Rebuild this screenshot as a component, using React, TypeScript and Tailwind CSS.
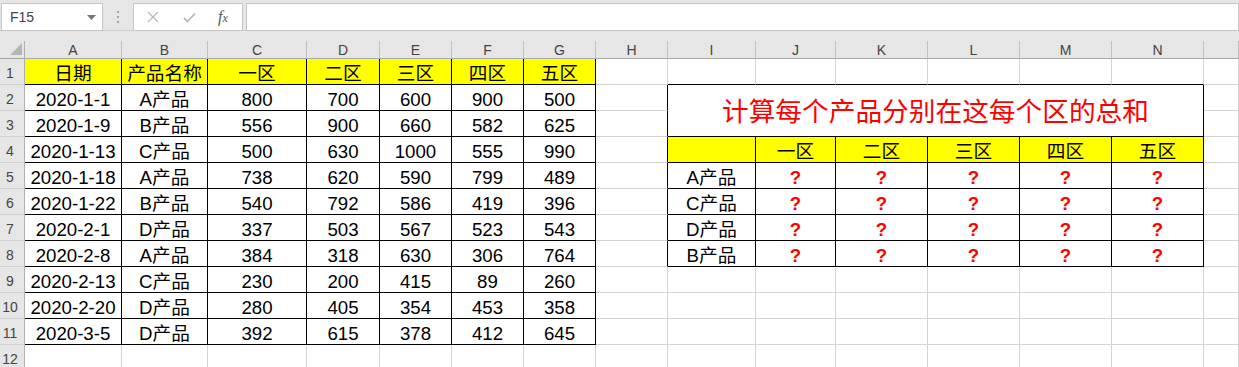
import React from "react";

const FONT = { fontFamily: '"Liberation Sans", "Noto Sans CJK SC", sans-serif' };

const left: string[][] = [
  ["日期", "产品名称", "一区", "二区", "三区", "四区", "五区"],
  ["2020-1-1", "A产品", "800", "700", "600", "900", "500"],
  ["2020-1-9", "B产品", "556", "900", "660", "582", "625"],
  ["2020-1-13", "C产品", "500", "630", "1000", "555", "990"],
  ["2020-1-18", "A产品", "738", "620", "590", "799", "489"],
  ["2020-1-22", "B产品", "540", "792", "586", "419", "396"],
  ["2020-2-1", "D产品", "337", "503", "567", "523", "543"],
  ["2020-2-8", "A产品", "384", "318", "630", "306", "764"],
  ["2020-2-13", "C产品", "230", "200", "415", "89", "260"],
  ["2020-2-20", "D产品", "280", "405", "354", "453", "358"],
  ["2020-3-5", "D产品", "392", "615", "378", "412", "645"],
];

const rightHead = ["", "一区", "二区", "三区", "四区", "五区"];
const rightNames = ["A产品", "C产品", "D产品", "B产品"];
const letters = ["A", "B", "C", "D", "E", "F", "G", "H", "I", "J", "K", "L", "M", "N", ""];

function cellContent(r: number, c: number): { text: string; yellow: boolean; red: boolean } {
  if (r >= 1 && r <= 11 && c >= 1 && c <= 7) {
    return { text: left[r - 1][c - 1], yellow: r === 1, red: false };
  }
  if (r === 4 && c >= 9 && c <= 14) {
    return { text: rightHead[c - 9], yellow: true, red: false };
  }
  if (r >= 5 && r <= 8 && c >= 9 && c <= 14) {
    if (c === 9) return { text: rightNames[r - 5], yellow: false, red: false };
    return { text: "?", yellow: false, red: true };
  }
  return { text: "", yellow: false, red: false };
}

function borderR(r: number, c: number): boolean {
  if (r >= 1 && r <= 11 && c >= 1 && c <= 7) return true;
  if (c === 8 && r >= 2 && r <= 8) return true;
  if (r >= 4 && r <= 8 && c >= 9 && c <= 14) return true;
  return false;
}

function borderB(r: number, c: number): boolean {
  if (r >= 1 && r <= 11 && c >= 1 && c <= 7) return true;
  if (r === 1 && c >= 9 && c <= 14) return true;
  if (r >= 4 && r <= 8 && c >= 9 && c <= 14) return true;
  return false;
}

function Cell({ r, c }: { r: number; c: number }) {
  const { text, yellow, red } = cellContent(r, c);
  const br = borderR(r, c) ? "border-r-black" : "border-r-[#d4d4d4]";
  const bb = borderB(r, c) ? "border-b-black" : "border-b-[#d4d4d4]";
  const bg = yellow ? "bg-[#ffff00]" : "bg-white";
  const color = red ? "text-[#ff0000] font-bold" : "text-black";
  return (
    <div
      className={`h-[26px] border-r border-b ${br} ${bb} ${bg} ${color} flex items-end justify-center overflow-visible whitespace-nowrap text-[18.67px] leading-[19px] pb-[1px]`}
    >
      {text}
    </div>
  );
}

function XIcon() {
  return (
    <svg width="12" height="12" viewBox="0 0 12 12">
      <path d="M1 1 L11 11 M11 1 L1 11" stroke="#b8b8b8" strokeWidth="1.3" fill="none" />
    </svg>
  );
}

function CheckIcon() {
  return (
    <svg width="13" height="11" viewBox="0 0 13 11">
      <path d="M1 6 L4.5 9.5 L12 1.5" stroke="#b8b8b8" strokeWidth="1.8" fill="none" />
    </svg>
  );
}

export default function App() {
  const rows = Array.from({ length: 12 }, (_, i) => i + 1);
  const cols = Array.from({ length: 15 }, (_, i) => i + 1);
  return (
    <div className="w-[1239px] h-[367px] overflow-hidden bg-white" style={FONT}>
      {/* formula bar */}
      <div className="h-[41px] bg-[#e6e6e6]">
        <div className="flex items-start pt-[3px] pl-[1px] h-[31px] border-b border-[#d0d0d0]">
          <div className="w-[102px] h-[28px] bg-white border border-[#c6c6c6] flex items-center justify-between pl-[8px] pr-[6px] text-[14px] text-[#444]">
            <span>F15</span>
            <svg width="9" height="5" viewBox="0 0 9 5">
              <path d="M0 0 L9 0 L4.5 5 Z" fill="#777" />
            </svg>
          </div>
          <div className="w-[30px] h-[28px] flex flex-col items-center justify-center gap-[3px]">
            <div className="w-[2px] h-[2px] bg-[#a8a8a8]" />
            <div className="w-[2px] h-[2px] bg-[#a8a8a8]" />
            <div className="w-[2px] h-[2px] bg-[#a8a8a8]" />
          </div>
          <div className="w-[110px] h-[28px] bg-white border border-[#c6c6c6] flex items-center pl-[13px]">
            <XIcon />
            <div className="ml-[24px]">
              <CheckIcon />
            </div>
            <span
              className="ml-[22px] italic text-[16px] text-[#555]"
              style={{ fontFamily: '"Liberation Serif", serif' }}
            >
              f<span className="text-[12px]">x</span>
            </span>
          </div>
          <div className="ml-[3px] flex-1 h-[28px] bg-white border border-[#c6c6c6]" />
        </div>
      </div>

      {/* grid */}
      <div className="grid grid-cols-[25px_97px_86px_99px_73px_72px_72px_72px_72px_88px_80px_92px_92px_92px_92px_1fr]">
        {/* header row */}
        <div className="h-[18px] bg-[#e6e6e6] border-r border-b border-r-[#b0b0b0] border-b-[#a8a8a8] relative">
          <svg className="absolute left-[10px] top-[2px]" width="13" height="13" viewBox="0 0 13 13">
            <path d="M0 12 L12 0 L12 12 Z" fill="#b5b5b5" />
          </svg>
        </div>
        {letters.map((l, i) => (
          <div
            key={`h${i}`}
            className="h-[18px] bg-[#e6e6e6] border-r border-b border-r-[#c0c0c0] border-b-[#a8a8a8] flex items-center justify-center text-[14px] leading-[16px] text-[#444]"
          >
            {l}
          </div>
        ))}

        {rows.map((r) => (
          <React.Fragment key={`r${r}`}>
            <div className="h-[26px] bg-[#e6e6e6] border-r border-b border-r-[#b0b0b0] border-b-[#d0d0d0] flex items-end justify-center pr-[4px] pb-[2px] text-[14px] leading-[17px] text-[#444]">
              {r}
            </div>
            {cols.map((c) => {
              if (c >= 9 && c <= 14 && (r === 2 || r === 3)) {
                if (r === 2 && c === 9) {
                  return (
                    <div
                      key={`c${r}-${c}`}
                      className="col-span-6 row-span-2 border-r border-b border-r-black border-b-black bg-white flex items-center justify-center text-[26.7px] leading-[32px] text-[#ff0000] whitespace-nowrap pt-[2px]"
                    >
                      计算每个产品分别在这每个区的总和
                    </div>
                  );
                }
                return null;
              }
              return <Cell key={`c${r}-${c}`} r={r} c={c} />;
            })}
          </React.Fragment>
        ))}
      </div>
    </div>
  );
}
